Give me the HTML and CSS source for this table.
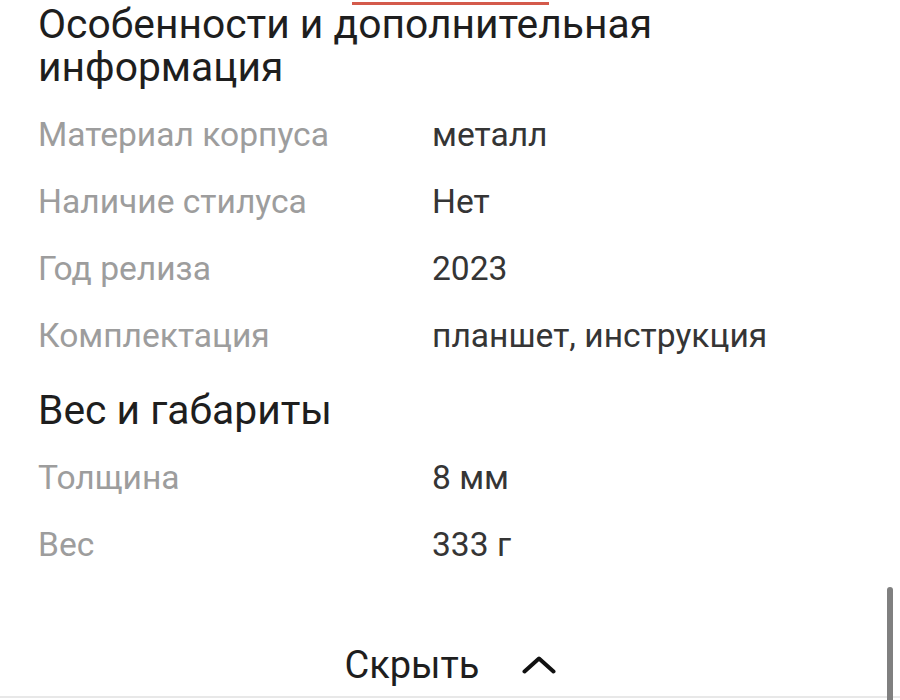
FILE: index.html
```html
<!DOCTYPE html>
<html lang="ru">
<head>
<meta charset="utf-8">
<link rel="stylesheet" href="styles.css">
</head>
<body>
<div class="page">
  <div class="tabbar"><div class="tab-indicator"></div></div>
  <h2 class="section-title first">Особенности и дополнительная информация</h2>
  <div class="specs">
    <div class="row"><span class="label">Материал корпуса</span><span class="value">металл</span></div>
    <div class="row"><span class="label">Наличие стилуса</span><span class="value">Нет</span></div>
    <div class="row"><span class="label">Год релиза</span><span class="value">2023</span></div>
    <div class="row"><span class="label">Комплектация</span><span class="value">планшет, инструкция</span></div>
  </div>
  <h2 class="section-title">Вес и габариты</h2>
  <div class="specs">
    <div class="row"><span class="label">Толщина</span><span class="value">8 мм</span></div>
    <div class="row"><span class="label">Вес</span><span class="value">333 г</span></div>
  </div>
  <div class="footer">
    <button class="toggle">
      <span class="toggle-text">Скрыть</span>
      <svg class="chevron" width="34" height="18" viewBox="0 0 34 18"><polyline points="2.5,15.5 17,2.5 31.5,15.5" fill="none" stroke="#111" stroke-width="4" stroke-linecap="round" stroke-linejoin="round"/></svg>
    </button>
  </div>
</div>
<div class="scrollbar"></div>
</body>
</html>
```

FILE: styles.css
```css
html, body {
  margin: 0;
  padding: 0;
  background: #ffffff;
}
body {
  font-family: Roboto, "Noto Sans", sans-serif;
  overflow: hidden;
  height: 700px;
}
.page {
  padding-left: 38px;
}
.tabbar {
  height: 5px;
  display: flex;
  align-items: flex-end;
}
.tab-indicator {
  margin-left: 314px;
  width: 197px;
  height: 3px;
  background: #d45a4b;
}
.section-title {
  margin: 20px 0 0 0;
  font-size: 40.8px;
  font-weight: 400;
  line-height: 43px;
  color: #1e1e1e;
  letter-spacing: 0;
}
.section-title.first {
  margin-top: -2px;
  padding-right: 200px;
}
.specs {
  margin-top: 12px;
}
.row {
  display: grid;
  grid-template-columns: 394px 1fr;
  height: 67px;
  line-height: 67px;
  font-size: 33.6px;
}
.label {
  color: #9d9d9d;
}
.value {
  color: #353535;
}
.footer {
  margin-top: 66px;
  display: flex;
  justify-content: center;
  margin-left: -38px;
  padding-bottom: 10px;
  border-bottom: 2px solid #e8e8e8;
}
.toggle {
  display: flex;
  align-items: center;
  gap: 42px;
  background: none;
  border: 0;
  padding: 0;
  font-family: Roboto, "Noto Sans", sans-serif;
  font-size: 38px;
  line-height: 42px;
  color: #1e1e1e;
}
.chevron {
  display: block;
}
.scrollbar {
  position: fixed;
  right: 7px;
  top: 587px;
  bottom: 0;
  width: 6px;
  background: #808080;
  border-radius: 3px 3px 0 0;
}
```
